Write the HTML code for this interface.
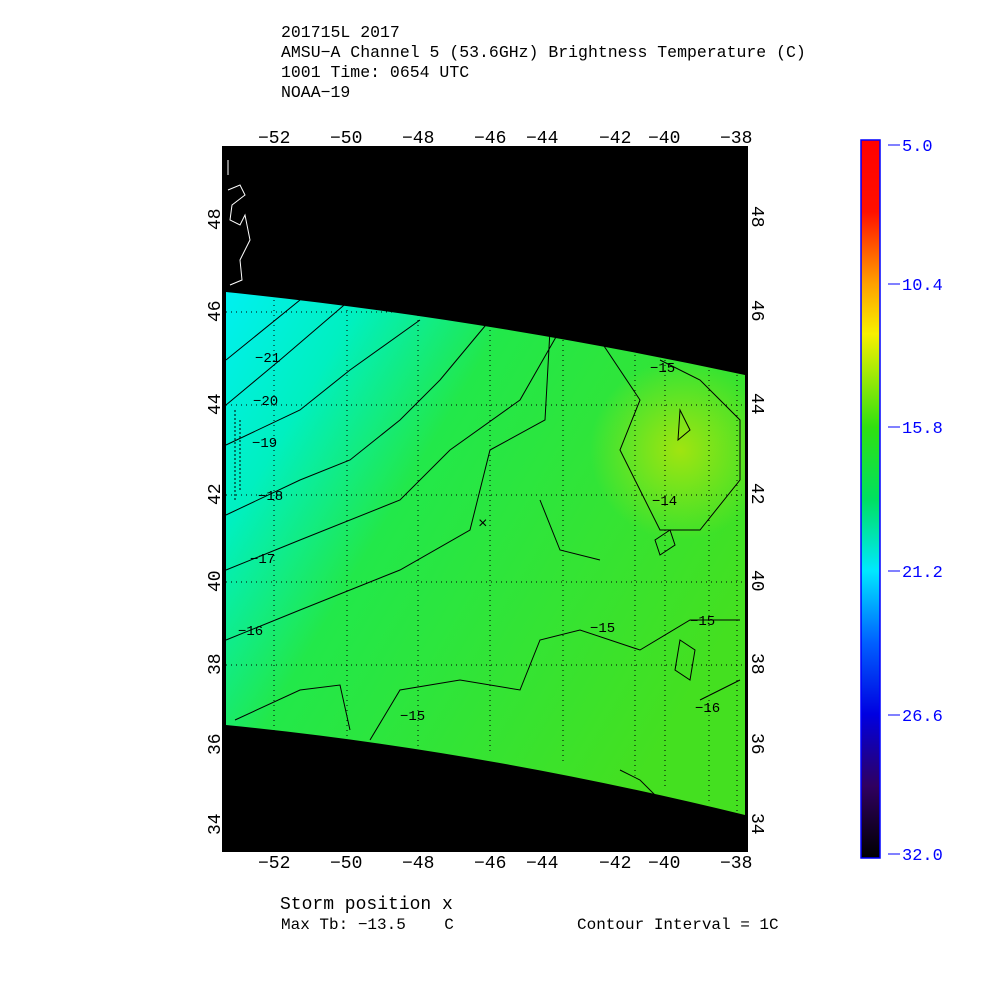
<!DOCTYPE html>
<html><head><style>
body{margin:0;background:#fff;width:1000px;height:1000px;overflow:hidden;font-family:"Liberation Mono",monospace}
.t{position:absolute;font-size:16.5px;color:#000;white-space:pre;line-height:20px}
</style></head><body>
<div class="t" style="left:281px;top:23px">201715L 2017
AMSU−A Channel 5 (53.6GHz) Brightness Temperature (C)
1001 Time: 0654 UTC
NOAA−19</div>
<svg width="1000" height="1000" style="position:absolute;left:0;top:0" font-family="Liberation Mono,monospace">
<defs>
<linearGradient id="sw" x1="0" y1="0" x2="1" y2="0.6">
<stop offset="0" stop-color="#00f0f0"/>
<stop offset="0.2" stop-color="#00f0c0"/>
<stop offset="0.42" stop-color="#22e84a"/>
<stop offset="1" stop-color="#44e020"/>
</linearGradient>
<radialGradient id="yb" cx="680" cy="450" r="90" gradientUnits="userSpaceOnUse">
<stop offset="0" stop-color="#a0e410"/><stop offset="1" stop-color="#a0e410" stop-opacity="0"/>
</radialGradient>
<linearGradient id="cb" x1="0" y1="0" x2="0" y2="1">
<stop offset="0" stop-color="#ff0000"/>
<stop offset="0.1" stop-color="#ff1000"/>
<stop offset="0.2" stop-color="#ffa000"/>
<stop offset="0.27" stop-color="#f8f000"/>
<stop offset="0.4" stop-color="#30e010"/>
<stop offset="0.5" stop-color="#00e060"/>
<stop offset="0.6" stop-color="#00e8ff"/>
<stop offset="0.7" stop-color="#0060ff"/>
<stop offset="0.8" stop-color="#0000e0"/>
<stop offset="0.9" stop-color="#300060"/>
<stop offset="1" stop-color="#000000"/>
</linearGradient>
</defs>
<rect x="222" y="146" width="526" height="706" fill="#000"/>
<path d="M226 292 Q480 318 745 375 L745 815 Q480 750 226 725 Z" fill="url(#sw)"/>
<path d="M226 292 Q480 318 745 375 L745 815 Q480 750 226 725 Z" fill="url(#yb)"/>
<g stroke="#000" stroke-width="1" stroke-dasharray="1,4" fill="none">
<path d="M274 290V740M347 295V745M418 300V750M490 305V755M563 315V765M635 325V780M665 330V790M709 340V805M737 350V815"/>
<path d="M226 312H745M226 405H745M226 495H745M226 582H745M226 665H745"/>
</g>
<g stroke="#000" fill="none" stroke-width="1">
<path d="M226 360 L300 300 M226 405 L280 360 L350 300 M226 445 L300 410 L350 370 L420 320 M226 515 L300 480 L350 460 L400 420 L440 380 L490 320 M226 570 L300 540 L400 500 L450 450 L520 400 L560 330 M226 640 L300 610 L400 570 L470 530 L490 450 L545 420 L550 330 M235 720 L300 690 L340 685 L350 730 M370 740 L400 690 L460 680 L520 690 L540 640 L580 630 L640 650 L690 620 L740 620 M600 340 L640 400 L620 450 L640 490 L660 530 L700 530 L740 480 L740 420 L700 380 L660 360 M600 560 L560 550 L540 500 M680 640 L695 650 L690 680 L675 670 Z M655 540 L670 530 L675 545 L660 555 Z M680 410 L690 430 L678 440 Z M700 700 L740 680 M620 770 L640 780 L660 800"/>
</g>
<g fill="#000" font-size="14">
<text x="255" y="362">−21</text><text x="253" y="405">−20</text><text x="252" y="447">−19</text>
<text x="258" y="500">−18</text><text x="250" y="563">−17</text><text x="238" y="635">−16</text>
<text x="652" y="505">−14</text><text x="590" y="632">−15</text><text x="690" y="625">−15</text>
<text x="400" y="720">−15</text><text x="695" y="712">−16</text><text x="650" y="372">−15</text>
</g>
<text x="478" y="528" font-size="16">×</text>
<path d="M235 410 V500 M240 420V490" stroke="#000" stroke-dasharray="2,2"/>
<path d="M228 160V175 M228 190 L240 185 L245 195 L232 205 L230 220 L240 225 L245 215 L250 240 L240 260 L242 280 L230 285" stroke="#fff" fill="none"/>
<rect x="222.5" y="146.5" width="525" height="705" fill="none" stroke="#000"/>
<g font-size="18" fill="#000">
<text x="258" y="143">−52</text><text x="330" y="143">−50</text><text x="402" y="143">−48</text><text x="474" y="143">−46</text><text x="526" y="143">−44</text><text x="599" y="143">−42</text><text x="648" y="143">−40</text><text x="720" y="143">−38</text>
<text x="258" y="868">−52</text><text x="330" y="868">−50</text><text x="402" y="868">−48</text><text x="474" y="868">−46</text><text x="526" y="868">−44</text><text x="599" y="868">−42</text><text x="648" y="868">−40</text><text x="720" y="868">−38</text>
<g transform="rotate(-90)">
<text x="-230" y="220">48</text><text x="-322" y="220">46</text><text x="-415" y="220">44</text><text x="-505" y="220">42</text><text x="-592" y="220">40</text><text x="-675" y="220">38</text><text x="-755" y="220">36</text><text x="-835" y="220">34</text>
</g>
<g transform="rotate(90)">
<text x="206" y="-752">48</text><text x="300" y="-752">46</text><text x="393" y="-752">44</text><text x="483" y="-752">42</text><text x="570" y="-752">40</text><text x="653" y="-752">38</text><text x="733" y="-752">36</text><text x="813" y="-752">34</text>
</g>
</g>
<rect x="861" y="140" width="19" height="718" fill="url(#cb)" stroke="#00f" stroke-width="1.5"/>
<g fill="#00f" font-size="17">
<path d="M888 145h12M888 284h12M888 427h12M888 571h12M888 715h12M888 854h12" stroke="#00f"/>
<text x="902" y="151">5.0</text><text x="902" y="290">10.4</text><text x="902" y="433">15.8</text><text x="902" y="577">21.2</text><text x="902" y="721">26.6</text><text x="902" y="860">32.0</text>
</g>
<text x="280" y="909" font-size="18">Storm position x</text>
<text x="281" y="929" font-size="16" xml:space="preserve">Max Tb: −13.5    C</text>
<text x="577" y="929" font-size="16">Contour Interval = 1C</text>
</svg>
</body></html>
